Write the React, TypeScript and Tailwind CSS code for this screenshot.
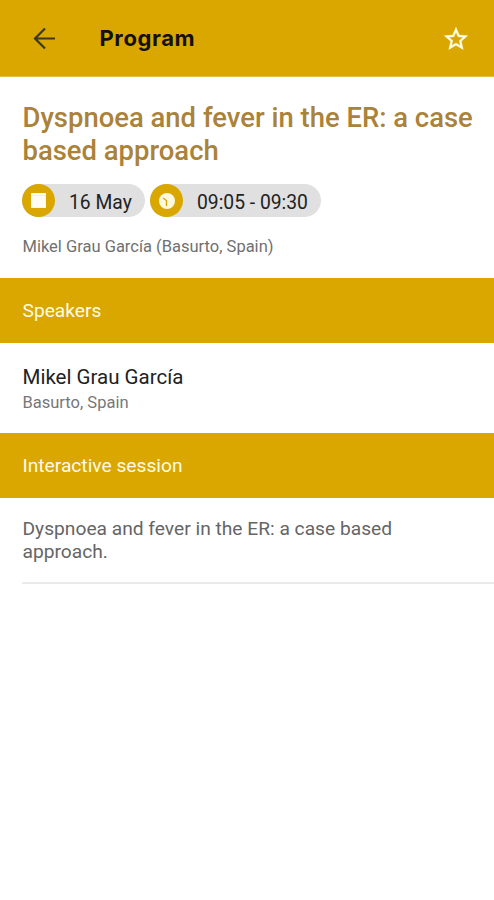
import type { ReactNode } from "react";

function Chip({ icon, children, className }: { icon: ReactNode; children: ReactNode; className: string }) {
  return (
    <div className={`flex h-[33px] items-center rounded-full bg-[#e0e0e0] text-[19.3px] text-[#222222] ${className}`}>
      <span className="mr-[14px] flex size-[33px] shrink-0 items-center justify-center rounded-full bg-[#d9a700]">{icon}</span>
      <span className="pt-[5px] leading-[28px] whitespace-nowrap">{children}</span>
    </div>
  );
}

function SectionHeader({ children }: { children: ReactNode }) {
  return (
    <h2 className="flex h-[65px] items-center bg-[#d9a700] pt-[2px] pl-[22.5px] text-[19.2px] text-[#fffbe5]">{children}</h2>
  );
}

export default function App() {
  return (
    <div className="min-h-[900px] w-[494px] overflow-hidden bg-white font-['Roboto','Liberation_Sans',sans-serif]">
      <header className="flex h-[77px] items-center border-b border-[#e2bd48] bg-[#d9a700]">
        <button aria-label="Back" className="ml-[33px]">
          <svg className="block" width="24" height="24" viewBox="0 0 24 24" fill="none" stroke="#3d3818" strokeWidth="2.2">
            <path d="M22 12.5H2M12 2.5L2 12.5L12 22.5" />
          </svg>
        </button>
        <h1 className="ml-[42.5px] font-['Inter','Liberation_Sans',sans-serif] text-[22px] font-bold tracking-[0.6px] text-[#14110a]">Program</h1>
        <button aria-label="Favorite" className="mt-[2px] mr-[24px] ml-auto">
          <svg className="block" width="28" height="28" viewBox="0 0 24 24" fill="#fffde9" stroke="#fffde9" strokeWidth="0.35">
            <path d="M22 9.24l-7.19-.62L12 2 9.19 8.63 2 9.24l5.46 4.73L5.82 21 12 17.27 18.18 21l-1.63-7.03L22 9.24zM12 15.4l-3.76 2.27 1-4.28-3.32-2.88 4.38-.38L12 6.1l1.71 4.04 4.38.38-3.32 2.88 1 4.28L12 15.4z" />
          </svg>
        </button>
      </header>
      <section className="h-[201px] pt-[25px] pl-[22px]">
        <h2 className="pl-[0.5px] text-[27.45px] leading-[33px] font-medium whitespace-nowrap text-[#aa8238]">
          Dyspnoea and fever in the ER: a case<br />based approach
        </h2>
        <div className="mt-[16px] flex gap-[5px]">
          <Chip className="w-[123px]" icon={
            <svg width="17" height="17" viewBox="0 0 16 16">
              <path d="M1 1H15V15H1Z" fill="#fffdf3" />
              <path d="M1 3.5H15" stroke="#f5e5bb" strokeWidth="1" strokeDasharray="2 1" />
            </svg>
          }>16 May</Chip>
          <Chip className="w-[171px]" icon={
            <svg width="18" height="18" viewBox="0 0 18 18" fill="none">
              <circle cx="9" cy="9" r="8" fill="#fff9df" />
              <path d="M5 6L8.5 8.5V14" stroke="#d9a700" strokeWidth="1.4" />
            </svg>
          }>09:05 - 09:30</Chip>
        </div>
        <p className="mt-[18px] pl-[0.5px] text-[16.5px] leading-[24px] text-[#707070]">Mikel Grau García (Basurto, Spain)</p>
      </section>
      <SectionHeader>Speakers</SectionHeader>
      <section className="h-[90px] pt-[21px] pl-[22.5px]">
        <h3 className="text-[20.5px] leading-[26px] text-[#222222]">Mikel Grau García</h3>
        <p className="text-[16.5px] leading-[25px] text-[#777777]">Basurto, Spain</p>
      </section>
      <SectionHeader>Interactive session</SectionHeader>
      <section className="ml-[22px] h-[86px] border-b-2 border-[#eaeaea] pt-[18.5px] pl-[0.5px]">
        <p className="text-[19.2px] leading-[23px] text-[#656565]">Dyspnoea and fever in the ER: a case based<br />approach.</p>
      </section>
    </div>
  );
}
